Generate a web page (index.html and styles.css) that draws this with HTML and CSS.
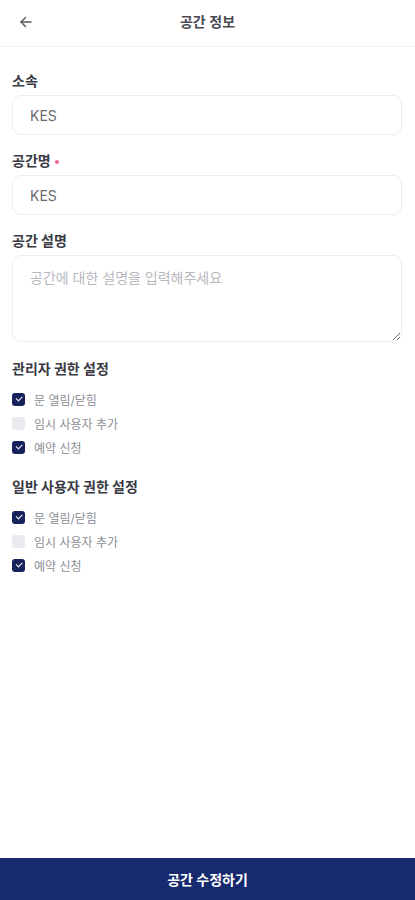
FILE: index.html
```html
<html lang="ko">

<head>
  <meta charset="UTF-8">
  <meta name="viewport" content="width=device-width, initial-scale=1.0">
  <title>공간 정보</title>
  <link rel="stylesheet" href="styles.css">
</head>

<body>
  <div class="page">
    <header class="header">
      <button class="back" aria-label="뒤로">
        <svg width="16" height="16" viewBox="0 0 16 16" fill="none" stroke="#555" stroke-width="1.4" stroke-linecap="round" stroke-linejoin="round">
          <path d="M13 8H3"/>
          <path d="M7.5 3.5L3 8l4.5 4.5"/>
        </svg>
      </button>
      <h1 class="title">공간 정보</h1>
    </header>

    <main class="form">
      <div class="field">
        <label class="label">소속</label>
        <input class="input" type="text" value="KES">
      </div>

      <div class="field">
        <label class="label">공간명 <span class="required"></span></label>
        <input class="input" type="text" value="KES">
      </div>

      <div class="field">
        <label class="label">공간 설명</label>
        <textarea class="textarea" placeholder="공간에 대한 설명을 입력해주세요"></textarea>
      </div>

      <div class="group">
        <div class="group-title">관리자 권한 설정</div>
        <label class="check"><input type="checkbox" checked><span class="box"></span>문 열림/닫힘</label>
        <label class="check"><input type="checkbox"><span class="box"></span>임시 사용자 추가</label>
        <label class="check"><input type="checkbox" checked><span class="box"></span>예약 신청</label>
      </div>

      <div class="group">
        <div class="group-title">일반 사용자 권한 설정</div>
        <label class="check"><input type="checkbox" checked><span class="box"></span>문 열림/닫힘</label>
        <label class="check"><input type="checkbox"><span class="box"></span>임시 사용자 추가</label>
        <label class="check"><input type="checkbox" checked><span class="box"></span>예약 신청</label>
      </div>
    </main>

    <button class="submit">공간 수정하기</button>
  </div>
</body>

</html>
```

FILE: styles.css
```css
* {
  box-sizing: border-box;
}

body {
  margin: 0;
  font-family: Inter, "Noto Sans CJK KR", sans-serif;
  color: #333;
  background: #fff;
}

.page {
  height: 900px;
  display: flex;
  flex-direction: column;
}

.header {
  position: relative;
  height: 47px;
  display: flex;
  align-items: center;
  justify-content: center;
  border-bottom: 1px solid #f2f2f4;
}

.back {
  position: absolute;
  left: 16px;
  top: 12px;
  width: 20px;
  height: 20px;
  padding: 0;
  border: 0;
  background: none;
  display: flex;
  align-items: center;
  justify-content: center;
}

.title {
  margin: 0 0 4px;
  font-size: 14px;
  font-weight: 600;
  color: #4a4a52;
}

.form {
  flex: 1;
  padding: 24px 13px 0 12px;
}

.field {
  margin-bottom: 16px;
}

.field:nth-child(3) {
  margin-bottom: 17px;
}

.label {
  display: flex;
  align-items: center;
  gap: 4px;
  font-size: 14px;
  font-weight: 700;
  color: #3a3a44;
  line-height: 20px;
  margin-bottom: 4px;
}

.required {
  width: 4px;
  height: 4px;
  border-radius: 50%;
  background: #f06292;
  margin-top: 2px;
}

.input,
.textarea {
  display: block;
  width: 100%;
  border: 1px solid #ececef;
  border-radius: 9px;
  font-family: Inter, "Noto Sans CJK KR", sans-serif;
  font-size: 14px;
  color: #6a6a70;
  background: #fff;
  outline: none;
}

.input {
  height: 40px;
  padding: 0 17px;
}

.textarea {
  height: 87px;
  padding: 11px 17px;
  resize: vertical;
}

.textarea::placeholder {
  color: #b8b8be;
}

.group {
  margin-bottom: 18px;
}

.group-title {
  font-size: 14px;
  font-weight: 700;
  color: #3a3a44;
  line-height: 20px;
  margin-bottom: 8px;
}

.check {
  display: flex;
  align-items: center;
  height: 24px;
  font-size: 12px;
  color: #8e8e96;
}

.check input {
  display: none;
}

.box {
  width: 13px;
  height: 13px;
  border-radius: 3px;
  background: #eaeaf0;
  margin-right: 9px;
  display: flex;
  align-items: center;
  justify-content: center;
}

.check input:checked + .box {
  background: #17215c;
}

.check input:checked + .box::after {
  content: "";
  width: 5px;
  height: 2.5px;
  border-left: 1.6px solid #fff;
  border-bottom: 1.6px solid #fff;
  transform: translateY(-1px) rotate(-45deg);
}

.submit {
  height: 42px;
  width: 100%;
  border: 0;
  background: #172a70;
  color: #fff;
  font-family: Inter, "Noto Sans CJK KR", sans-serif;
  font-size: 14px;
  font-weight: 700;
}
```
